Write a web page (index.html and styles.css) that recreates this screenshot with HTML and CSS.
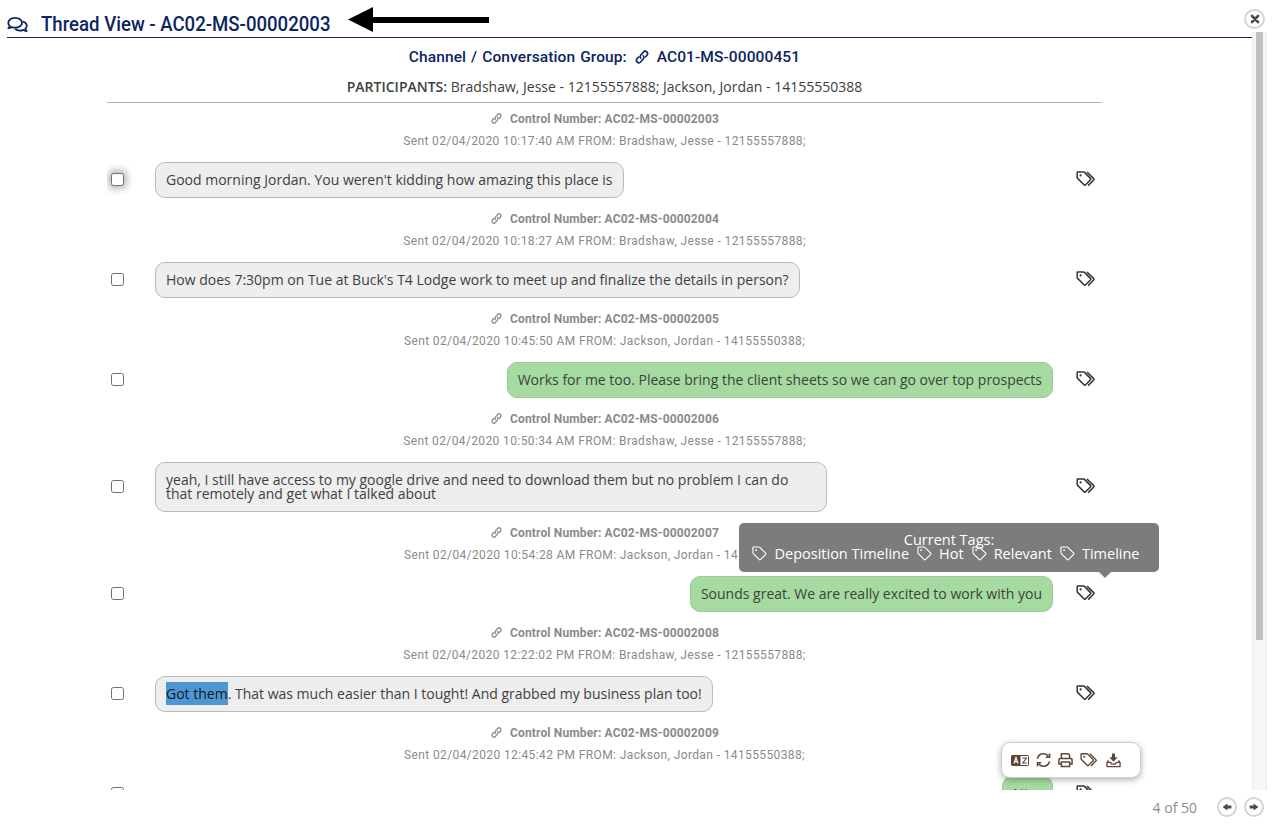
FILE: index.html
```html
<!DOCTYPE html>
<html lang="en">
<head>
<meta charset="utf-8">
<title>Thread View</title>
<link rel="stylesheet" href="styles.css">
</head>
<body>
<svg class="defs" width="0" height="0" aria-hidden="true">
  <defs>
    <symbol id="i-tags" viewBox="0 0 20 16">
      <path d="M1.2 1.6 Q1.2 1 1.8 1 H7.6 Q8.1 1 8.5 1.4 L14.6 7.6 Q15.2 8.2 14.6 8.8 L9.4 14 Q8.8 14.6 8.2 14 L1.6 7.4 Q1.2 7 1.2 6.5 Z" fill="none" stroke="currentColor" stroke-width="1.5"/>
      <circle cx="4.6" cy="4.4" r="1.1" fill="currentColor"/>
      <path d="M11 1 L17.9 7.9 Q18.4 8.3 17.9 8.8 L12.2 14.6" fill="none" stroke="currentColor" stroke-width="1.5"/>
    </symbol>
    <symbol id="i-tag" viewBox="0 0 16 16">
      <path d="M1 1.7 Q1 1 1.7 1 H7.4 Q7.9 1 8.3 1.4 L14.6 7.7 Q15.2 8.3 14.6 8.9 L9 14.6 Q8.4 15.2 7.8 14.6 L1.4 8.2 Q1 7.8 1 7.3 Z" fill="none" stroke="currentColor" stroke-width="1.2"/>
      <circle cx="4.4" cy="4.4" r="1" fill="currentColor"/>
    </symbol>
    <symbol id="i-link" viewBox="0 0 16 16">
      <path d="M6.8 9.2 Q5.4 7.8 6.6 6.2 L9.4 3 Q11 1.4 12.8 2.8 Q14.4 4.4 13 6.2 L11.4 8" fill="none" stroke="currentColor" stroke-width="1.6" stroke-linecap="round"/>
      <path d="M9.2 6.8 Q10.6 8.2 9.4 9.8 L6.6 13 Q5 14.6 3.2 13.2 Q1.6 11.6 3 9.8 L4.6 8" fill="none" stroke="currentColor" stroke-width="1.6" stroke-linecap="round"/>
    </symbol>
  </defs>
</svg>

<div class="page">
  <div class="top">
    <main class="main">
      <header class="title-bar">
        <svg class="title-icon" viewBox="0 0 22 18" aria-hidden="true">
          <path d="M8.5 2 C4.4 2 1.2 4.3 1.2 7.2 C1.2 8.5 1.8 9.6 2.8 10.5 C2.5 11.5 1.9 12.3 1.3 12.9 C2.8 12.8 4 12.3 4.9 11.6 C6 12.1 7.2 12.4 8.5 12.4 C12.6 12.4 15.8 10 15.8 7.2 C15.8 4.3 12.6 2 8.5 2 Z" fill="none" stroke="currentColor" stroke-width="1.9" stroke-linejoin="round"/>
          <path d="M16.6 6 C19 6.7 20.8 8.4 20.8 10.4 C20.8 11.6 20.2 12.7 19.2 13.5 C19.5 14.6 20.1 15.4 20.7 16 C19.2 15.9 18 15.4 17.1 14.7 C16 15.2 14.8 15.5 13.5 15.5 C11.4 15.5 9.6 14.8 8.4 13.7" fill="none" stroke="currentColor" stroke-width="1.9" stroke-linejoin="round"/>
        </svg>
        <h1 class="title">Thread View - AC02-MS-00002003</h1>
      </header>

      <div class="content">
        <div class="channel">Channel / Conversation Group:
          <svg class="link-navy" aria-hidden="true"><use href="#i-link"/></svg>
          AC01-MS-00000451</div>
        <div class="participants"><b>PARTICIPANTS:</b> Bradshaw, Jesse - 12155557888; Jackson, Jordan - 14155550388</div>

        <div class="list">
          <article class="msg">
            <div class="ctrl"><svg class="link-grey" aria-hidden="true"><use href="#i-link"/></svg>Control Number: AC02-MS-00002003</div>
            <div class="sent">Sent 02/04/2020 10:17:40 AM FROM: Bradshaw, Jesse - 12155557888;</div>
            <div class="line">
              <span class="check focused"></span>
              <div class="bubble-wrap"><div class="bubble">Good morning Jordan. You weren't kidding how amazing this place is</div></div>
              <svg class="tag" aria-hidden="true"><use href="#i-tags"/></svg>
            </div>
          </article>
          <article class="msg">
            <div class="ctrl"><svg class="link-grey" aria-hidden="true"><use href="#i-link"/></svg>Control Number: AC02-MS-00002004</div>
            <div class="sent">Sent 02/04/2020 10:18:27 AM FROM: Bradshaw, Jesse - 12155557888;</div>
            <div class="line">
              <span class="check"></span>
              <div class="bubble-wrap"><div class="bubble">How does 7:30pm on Tue at Buck's T4 Lodge work to meet up and finalize the details in person?</div></div>
              <svg class="tag" aria-hidden="true"><use href="#i-tags"/></svg>
            </div>
          </article>
          <article class="msg">
            <div class="ctrl"><svg class="link-grey" aria-hidden="true"><use href="#i-link"/></svg>Control Number: AC02-MS-00002005</div>
            <div class="sent">Sent 02/04/2020 10:45:50 AM FROM: Jackson, Jordan - 14155550388;</div>
            <div class="line">
              <span class="check"></span>
              <div class="bubble-wrap right"><div class="bubble green">Works for me too. Please bring the client sheets so we can go over top prospects</div></div>
              <svg class="tag" aria-hidden="true"><use href="#i-tags"/></svg>
            </div>
          </article>
          <article class="msg">
            <div class="ctrl"><svg class="link-grey" aria-hidden="true"><use href="#i-link"/></svg>Control Number: AC02-MS-00002006</div>
            <div class="sent">Sent 02/04/2020 10:50:34 AM FROM: Bradshaw, Jesse - 12155557888;</div>
            <div class="line">
              <span class="check"></span>
              <div class="bubble-wrap"><div class="bubble">yeah, I still have access to my google drive and need to download them but no problem I can do that remotely and get what I talked about</div></div>
              <svg class="tag" aria-hidden="true"><use href="#i-tags"/></svg>
            </div>
          </article>
          <article class="msg">
            <div class="ctrl"><svg class="link-grey" aria-hidden="true"><use href="#i-link"/></svg>Control Number: AC02-MS-00002007</div>
            <div class="sent">Sent 02/04/2020 10:54:28 AM FROM: Jackson, Jordan - 14155550388;</div>
            <div class="line">
              <span class="check"></span>
              <div class="bubble-wrap right"><div class="bubble green">Sounds great. We are really excited to work with you</div></div>
              <svg class="tag" aria-hidden="true"><use href="#i-tags"/></svg>
            </div>
          </article>
          <article class="msg">
            <div class="ctrl"><svg class="link-grey" aria-hidden="true"><use href="#i-link"/></svg>Control Number: AC02-MS-00002008</div>
            <div class="sent">Sent 02/04/2020 12:22:02 PM FROM: Bradshaw, Jesse - 12155557888;</div>
            <div class="line">
              <span class="check"></span>
              <div class="bubble-wrap"><div class="bubble"><span class="selected">Got them</span>. That was much easier than I tought! And grabbed my business plan too!</div></div>
              <svg class="tag" aria-hidden="true"><use href="#i-tags"/></svg>
            </div>
          </article>
          <article class="msg">
            <div class="ctrl"><svg class="link-grey" aria-hidden="true"><use href="#i-link"/></svg>Control Number: AC02-MS-00002009</div>
            <div class="sent">Sent 02/04/2020 12:45:42 PM FROM: Jackson, Jordan - 14155550388;</div>
            <div class="line">
              <span class="check"></span>
              <div class="bubble-wrap right"><div class="bubble green">Nice</div></div>
              <svg class="tag" aria-hidden="true"><use href="#i-tags"/></svg>
            </div>
          </article>
        </div>
      </div>
    </main>
    <div class="scrollbar"><div class="thumb"></div></div>
  </div>

  <footer class="footer">
    <span class="count">4 of 50</span>
    <button class="round-btn" aria-label="Previous">
      <svg viewBox="0 0 12 12" aria-hidden="true"><path d="M6.4 2.4 V4.4 H10.4 V7.6 H6.4 V9.6 L1.6 6 Z" fill="currentColor"/></svg>
    </button>
    <button class="round-btn" aria-label="Next">
      <svg viewBox="0 0 12 12" aria-hidden="true"><path d="M5.6 2.4 V4.4 H1.6 V7.6 H5.6 V9.6 L10.4 6 Z" fill="currentColor"/></svg>
    </button>
  </footer>
</div>

<svg class="arrow" viewBox="0 0 141 25" aria-hidden="true">
  <path d="M0 12.5 L25 0 V10 H141 V16 H25 V25 Z" fill="#000"/>
</svg>

<button class="round-btn close" aria-label="Close">
  <svg viewBox="0 0 12 12" aria-hidden="true"><path d="M3 3 L9 9 M9 3 L3 9" stroke="currentColor" stroke-width="2.6" stroke-linecap="round"/></svg>
</button>

<div class="tooltip">
  <div>Current Tags:</div>
  <div class="tt-tags">
    <svg aria-hidden="true"><use href="#i-tag"/></svg><span>Deposition Timeline</span>
    <svg aria-hidden="true"><use href="#i-tag"/></svg><span>Hot</span>
    <svg aria-hidden="true"><use href="#i-tag"/></svg><span>Relevant</span>
    <svg aria-hidden="true"><use href="#i-tag"/></svg><span>Timeline</span>
  </div>
</div>

<div class="toolbar">
  <svg class="tb-lang" viewBox="0 0 18 11" aria-hidden="true">
    <rect x="0.5" y="0.5" width="17" height="10" rx="0.8" fill="#fff" stroke="currentColor"/>
    <rect x="0.5" y="0.5" width="9" height="10" fill="currentColor"/>
    <path d="M3 8.5 L5 2.5 L7 8.5 M3.8 6.6 H6.2" fill="none" stroke="#fff" stroke-width="1.1"/>
    <path d="M11.5 3 H15.5 L11.8 8 H15.8" fill="none" stroke="currentColor" stroke-width="1.1"/>
  </svg>
  <svg class="tb-icon" viewBox="0 0 16 16" aria-hidden="true">
    <path d="M1.6 6.6 C2.3 3.5 4.9 1.4 8 1.4 C10.1 1.4 11.8 2.3 13 3.8 M14.4 1 V5 H10.4 M14.4 9.4 C13.7 12.5 11.1 14.6 8 14.6 C5.9 14.6 4.2 13.7 3 12.2 M1.6 15 V11 H5.6" fill="none" stroke="currentColor" stroke-width="1.7"/>
  </svg>
  <svg class="tb-icon" viewBox="0 0 16 16" aria-hidden="true">
    <path d="M3.6 6.5 V1.4 H11 L12.4 2.8 V6.5 M3.6 12.2 H1 V7.8 Q1 6.5 2.3 6.5 H13.7 Q15 6.5 15 7.8 V12.2 H12.4 M3.6 10.2 H12.4 V14.8 H3.6 Z" fill="none" stroke="currentColor" stroke-width="1.6"/>
  </svg>
  <svg class="tb-tags" aria-hidden="true"><use href="#i-tags"/></svg>
  <svg class="tb-icon tb-last" viewBox="0 0 16 16" aria-hidden="true">
    <path d="M6.4 1 H9.6 V5 H12.4 L8 9.8 L3.6 5 H6.4 Z" fill="currentColor"/>
    <path d="M1 11 L2.6 8.4 M15 11 L13.4 8.4 M1 10.6 H4.8 L6 12.4 H10 L11.2 10.6 H15 V15 H1 Z" fill="none" stroke="currentColor" stroke-width="1.4" stroke-linejoin="round"/>
  </svg>
</div>
</body>
</html>
```

FILE: styles.css
```css
* { box-sizing: border-box; }
html, body {
  margin: 0;
  height: 100%;
  overflow: hidden;
  background: #fff;
}
body {
  position: relative;
  font-family: "Open Sans", "Liberation Sans", sans-serif;
  color: #3f3f3f;
}
.defs { position: absolute; }

.page { height: 826px; display: flex; flex-direction: column; padding: 0 8px 0 7px; }
.top { display: flex; height: 790px; flex: none; }
.main { width: 1245px; flex: none; display: flex; flex-direction: column; overflow: hidden; }

.title-bar {
  height: 38px;
  flex: none;
  border-bottom: 1px solid #0c2461;
  display: flex;
  align-items: center;
  gap: 13px;
  padding-top: 11px;
  color: #0c2461;
}
.title-icon { width: 21px; height: 17px; flex: none; color: #0c2461; }
.title {
  margin: 0;
  font-family: "Roboto", "Liberation Sans", sans-serif;
  font-size: 20px;
  font-weight: 500;
  line-height: 24px;
  white-space: nowrap;
  transform: scaleX(0.93);
  transform-origin: left;
}

.content { margin-left: 100px; width: 995px; flex: 1; overflow: hidden; }
.channel {
  height: 37px;
  padding-top: 8px;
  text-align: center;
  font-family: "Roboto", "Liberation Sans", sans-serif;
  font-size: 15.5px;
  font-weight: 500;
  line-height: 22px;
  letter-spacing: 0.1px;
  color: #0c2461;
  word-spacing: 1px;
}
.link-navy { width: 16px; height: 16px; vertical-align: -3px; margin: 0 2px; color: #0c2461; }
.participants {
  height: 28px;
  padding-top: 2px;
  border-bottom: 1px solid #b5b5b5;
  text-align: center;
  font-size: 14px;
  line-height: 19px;
  color: #404040;
}
.participants b { font-weight: 600; }

.list { padding-top: 5px; }
.msg { padding-bottom: 10px; }
.ctrl, .sent {
  height: 22px;
  line-height: 22px;
  text-align: center;
  font-family: "Roboto", "Liberation Sans", sans-serif;
  font-size: 12px;
  white-space: nowrap;
}
.ctrl { font-weight: 700; color: #8a8a8a; letter-spacing: 0.15px; }
.sent { color: #8a8a8a; letter-spacing: 0.38px; margin-bottom: 10px; }
.link-grey { width: 13px; height: 13px; vertical-align: -2px; margin-right: 7px; color: #8a8a8a; }

.line { display: flex; align-items: center; }
.check {
  flex: none;
  width: 13px;
  height: 13px;
  margin: 0 31px 2px 4px;
  border: 1px solid #6f6f6f;
  border-radius: 2.5px;
  background: #fff;
}
.check.focused { box-shadow: 0 0 7px 3px rgba(0, 0, 0, 0.28); }
.bubble-wrap { width: 898px; flex: none; display: flex; }
.bubble-wrap.right { justify-content: flex-end; }
.bubble {
  max-width: 672px;
  padding: 10px;
  font-size: 14px;
  line-height: 14px;
  border: 1px solid #b9b9b9;
  border-radius: 10px;
  background: #eeeeee;
  color: #3f3f3f;
}
.bubble.green { background: #a5dba0; border-color: #9fc89b; }
.selected { background: #4f97d3; color: #0c1a26; padding: 2px 0; }
.tag { flex: none; width: 20px; height: 16px; margin: 0 0 3px 23px; color: #333; }

.scrollbar {
  width: 15px;
  flex: none;
  margin-top: 32px;
  background: #f6f6f6;
  border-left: 1px solid #ececec;
  border-right: 1px solid #ececec;
  padding: 0 3px;
}
.thumb { height: 608px; background: #c1c1c1; }

.footer {
  flex: 1;
  display: flex;
  align-items: center;
  justify-content: flex-end;
  gap: 7px;
  padding: 0 3px 2px 0;
}
.count { font-size: 14px; color: #8c8c8c; margin-right: 13px; }

.round-btn {
  width: 20px;
  height: 20px;
  padding: 0;
  border: 2px solid #d4d4d4;
  border-radius: 50%;
  background: #fff;
  color: #4a4a4a;
  display: flex;
  align-items: center;
  justify-content: center;
}
.round-btn svg { width: 12px; height: 12px; }
.close { position: absolute; left: 1244px; top: 9px; width: 21px; }

.arrow { position: absolute; left: 348px; top: 7px; width: 141px; height: 25px; }

.tooltip {
  position: absolute;
  left: 739px;
  top: 523px;
  width: 420px;
  height: 49px;
  padding-top: 10px;
  background: #7c7c7c;
  border-radius: 5px;
  color: #fff;
  font-size: 14.5px;
  line-height: 14px;
  text-align: center;
}
.tooltip::after {
  content: "";
  position: absolute;
  left: 360px;
  top: 49px;
  border: 6px solid transparent;
  border-top-color: #7c7c7c;
  border-bottom: 0;
}
.tt-tags { display: flex; align-items: center; justify-content: center; margin-top: -1px; padding-right: 14px; }
.tt-tags svg { width: 15px; height: 15px; flex: none; margin: 0 7px 0 8px; }

.toolbar {
  position: absolute;
  left: 1001px;
  top: 742px;
  width: 140px;
  height: 36px;
  display: flex;
  align-items: center;
  gap: 7px;
  padding-left: 9px;
  background: #fff;
  border: 1px solid #cfcfcf;
  border-radius: 9px;
  box-shadow: 0 2px 6px rgba(0, 0, 0, 0.3);
  color: #5c4536;
}
.tb-lang { width: 18px; height: 11px; flex: none; }
.tb-icon { width: 15px; height: 16px; flex: none; }
.tb-tags { width: 18px; height: 16px; flex: none; }
.tb-last { margin-left: 1px; }
```
